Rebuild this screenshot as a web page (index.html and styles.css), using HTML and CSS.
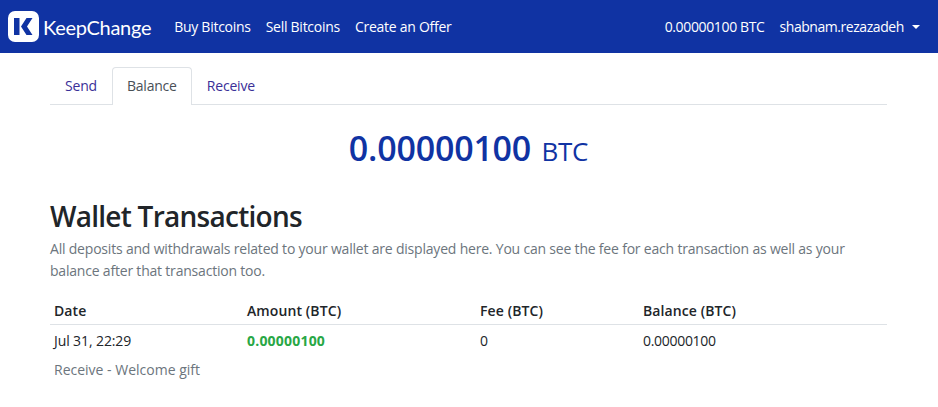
FILE: index.html
```html
<!DOCTYPE html>
<html lang="en">

<head>
    <meta charset="UTF-8">
    <meta name="viewport" content="width=device-width, initial-scale=1.0">
    <title>Wallet - KeepChange</title>
    <link rel="stylesheet" href="styles.css">
</head>

<body>

    <nav class="navbar">
        <a class="brand" href="#">
            <svg class="brand-icon" width="36" height="31" viewBox="0 0 36 31">
                <rect x="0" y="0" width="31" height="31" rx="7" fill="#fff"/>
                <path d="M6 7h5.500v17H6z" fill="#1033a3"/>
                <path d="M13 15.500L18.500 7H24.500l-5.500 8.500 5.500 8.500H18.500z" fill="#1033a3"/>
            </svg>
            <span class="brand-name">KeepChange</span>
        </a>
        <a class="nav-link" href="#">Buy Bitcoins</a>
        <a class="nav-link" href="#">Sell Bitcoins</a>
        <a class="nav-link" href="#">Create an Offer</a>
        <span class="nav-balance">0.00000100 BTC</span>
        <a class="nav-link user" href="#">shabnam.rezazadeh <span class="caret"></span></a>
    </nav>

    <div class="container">
        <div class="tabs">
            <a class="tab" href="#">Send</a>
            <a class="tab active" href="#">Balance</a>
            <a class="tab" href="#">Receive</a>
        </div>

        <h2 class="total"><b>0.00000100</b> <span>BTC</span></h2>

        <h1>Wallet Transactions</h1>
        <p class="lead">All deposits and withdrawals related to your wallet are displayed here. You can see the fee for each transaction as well as your balance after that transaction too.</p>

        <table>
            <thead>
                <tr>
                    <th class="col-date">Date</th>
                    <th class="col-amount">Amount (BTC)</th>
                    <th class="col-fee">Fee (BTC)</th>
                    <th>Balance (BTC)</th>
                </tr>
            </thead>
            <tbody>
                <tr>
                    <td>Jul 31, 22:29</td>
                    <td class="plus">0.00000100</td>
                    <td>0</td>
                    <td class="num">0.00000100</td>
                </tr>
                <tr>
                    <td colspan="4" class="note">Receive - Welcome gift</td>
                </tr>
            </tbody>
        </table>
    </div>

</body>

</html>
```

FILE: styles.css
```css
body {
    margin: 0;
    padding: 0;
    font-family: "Open Sans", "Noto Sans", sans-serif;
    font-size: 14px;
    color: #212529;
    background-color: #fff;
}

a {
    text-decoration: none;
}

.navbar {
    display: flex;
    align-items: center;
    height: 53px;
    padding: 0 18px 0 8px;
    background-color: #1033a3;
}

.brand {
    display: flex;
    align-items: center;
    margin-right: 23px;
    color: #fff;
}

.brand-icon {
    margin-right: -1px;
}

.brand-name {
    font-family: Lato, sans-serif;
    font-size: 20px;
    font-weight: 400;
    letter-spacing: -0.3px;
}

.nav-link {
    color: #fff;
    margin-right: 14px;
    letter-spacing: -0.27px;
}

.nav-link + .nav-link {
    margin-left: 1px;
}

.nav-balance {
    color: #fff;
    margin-left: auto;
    margin-right: 15px;
    letter-spacing: -0.36px;
}

.user {
    margin-right: 0;
    letter-spacing: -0.45px;
}

.caret {
    display: inline-block;
    margin-left: 5px;
    vertical-align: 3px;
    border-top: 4px solid #fff;
    border-left: 4px solid transparent;
    border-right: 4px solid transparent;
}

.container {
    margin: 0 51px 0 50px;
    padding-top: 14px;
}

.tabs {
    display: flex;
    height: 37px;
    border-bottom: 1px solid #dee2e6;
}

.tab {
    padding: 8px 14px 0;
    color: #3a2f98;
    border: 1px solid transparent;
    border-bottom: 0;
    letter-spacing: -0.2px;
}

.tab.active {
    height: 29px;
    color: #495057;
    background-color: #fff;
    border-color: #dee2e6;
    border-radius: 4px 4px 0 0;
}

.total {
    margin: 19px 0 0;
    height: 50px;
    text-align: center;
    font-size: 26px;
    font-weight: 400;
    line-height: 49px;
    color: #1033a3;
    word-spacing: 4px;
    letter-spacing: -0.3px;
}

.total b {
    font-size: 34px;
    font-weight: 600;
    letter-spacing: -0.2px;
}

h1 {
    margin: 23px 0 0;
    font-size: 28px;
    font-weight: 600;
    line-height: 38px;
    letter-spacing: -0.74px;
}

.lead {
    margin: 3px 0 0;
    line-height: 22px;
    color: #6c757d;
    letter-spacing: -0.2px;
}

table {
    width: 100%;
    margin-top: 15px;
    border-collapse: collapse;
}

th {
    padding: 0 4px;
    height: 27px;
    text-align: left;
    font-weight: 600;
    border-bottom: 1px solid #dee2e6;
    letter-spacing: 0.1px;
}

td {
    padding: 0 4px;
    height: 31px;
    letter-spacing: -0.1px;
}

.col-date {
    width: 185px;
}

.col-amount {
    width: 225px;
}

.col-fee {
    width: 155px;
}

.plus {
    font-weight: 700;
    color: #28a745;
    letter-spacing: 0.2px;
}

.num {
    letter-spacing: -0.3px;
}

.note {
    height: 26px;
    color: #6c757d;
    letter-spacing: 0;
}
```
